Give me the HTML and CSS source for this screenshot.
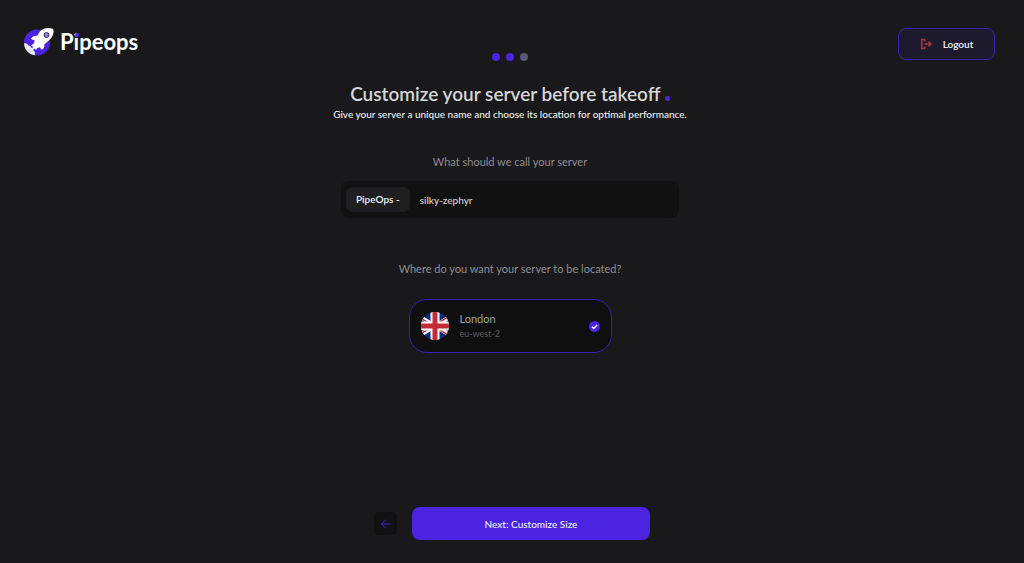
FILE: index.html
```html
<!DOCTYPE html>
<html lang="en">
<head>
    <meta charset="UTF-8">
    <meta name="viewport" content="width=device-width, initial-scale=1.0">
    <title>Pipeops - Customize your server</title>
    <link rel="stylesheet" href="styles.css">
</head>
<body>
    <header class="header">
        <a class="logo" href="#" aria-label="Pipeops">
            <svg class="logo-mark" viewBox="0 0 30 28" aria-hidden="true">
                <circle cx="13" cy="14.500" r="13" fill="#4a24e0"/>
                <path d="M0 15.500c2-.6 3.600.4 4.200 2 1.800-.3 3 .8 3 2.300 1.800.2 2.800 1.500 2.500 3 1.300.8 1.800 2.400 1.200 4.500C4.800 26.400.2 21.500 0 15.500z" fill="#e8e8f2"/>
                <path d="M16 3.200C19.500.2 24-.6 28 .6c1.600.5 1.800 1.800 1.500 4-.5 3.400-2.300 6-5 8.200l-4.300 3.600c.6 2.400-.3 4.400-2.700 5.400l-1.500-2.600-2.600.8-1.600 2.200-1-1.800-3 1.400 1.200-3.200-2-1 2.600-1.900 1.200-3.300-3.900-1.500c1.400-2.200 3.500-3.300 6.200-3z" fill="#fff"/>
                <circle cx="22.500" cy="7" r="2.500" fill="#8a84c8" stroke="#34307c" stroke-width="1"/>
            </svg>
            <span class="logo-text">P<span class="logo-i">i</span>peops</span>
        </a>
        <div class="steps">
            <span class="step active"></span>
            <span class="step active"></span>
            <span class="step"></span>
        </div>
        <button class="logout" type="button">
            <svg class="logout-icon" viewBox="0 0 12 12" aria-hidden="true">
                <path d="M5 1.500H1.800v9H5M5 1.500v2M5 8.500v2M4.500 6H11M8.500 3.500 11 6 8.500 8.500"/>
            </svg>
            Logout
        </button>
    </header>

    <form class="form" id="serverForm">
        <h1 class="title">Customize your server before takeoff <span class="title-dot"></span></h1>
        <p class="subtitle">Give your server a unique name and choose its location for optimal performance.</p>

        <label class="question" for="serverName">What should we call your server</label>
        <div class="name-field">
            <span class="prefix">PipeOps -</span>
            <input class="name-input" id="serverName" type="text" value="silky-zephyr">
        </div>

        <p class="question" id="locationLabel">Where do you want your server to be located?</p>
        <div class="locations" role="radiogroup" aria-labelledby="locationLabel">
            <label class="location" for="london">
                <svg class="flag" viewBox="0 0 28 28" aria-hidden="true">
                    <clipPath id="round"><circle cx="14" cy="14" r="14"/></clipPath>
                    <g clip-path="url(#round)">
                        <path d="M0 0h28v28H0z" fill="#0b2a7c"/>
                        <path d="M-4 3 32 25M32 3-4 25" stroke="#fff" stroke-width="4"/>
                        <path d="M-4 4 14 15M32 2 14 13M14 15 32 26M14 13-4 24" stroke="#c8283a" stroke-width="1.500"/>
                        <path d="M14 0v28M0 14h28" stroke="#fff" stroke-width="9"/>
                        <path d="M14 0v28M0 14h28" stroke="#c42a36" stroke-width="5"/>
                    </g>
                </svg>
                <span class="location-text">
                    <span class="city">London</span>
                    <span class="region">eu-west-2</span>
                </span>
                <span class="check">
                    <input class="check-input" id="london" type="radio" name="location" value="eu-west-2" checked>
                    <svg class="check-icon" viewBox="0 0 11 11" aria-hidden="true">
                        <path d="M3 5.700 4.800 7.400 8.100 3.900"/>
                    </svg>
                </span>
            </label>
        </div>
    </form>

    <footer class="footer">
        <button class="back" type="button" aria-label="Back">
            <svg class="back-icon" viewBox="0 0 10 10" aria-hidden="true">
                <path d="M9.500 5h-9M4.800.700.500 5l4.300 4.300"/>
            </svg>
        </button>
        <button class="next" type="submit" form="serverForm">Next: Customize Size</button>
    </footer>
</body>
</html>
```
FILE: styles.css
```css
* {
    box-sizing: border-box;
}

body {
    display: flex;
    flex-direction: column;
    min-height: 100vh;
    margin: 0;
    background-color: #19191b;
    color: #f0f0f0;
    font-family: Lato, sans-serif;
    font-size: 11px;
}

button,
input {
    font: inherit;
    color: inherit;
}

button {
    cursor: pointer;
}

h1,
p {
    margin: 0;
}

.header {
    display: grid;
    grid-template-columns: 1fr auto 1fr;
    align-items: start;
    padding: 28px 29px 0 24px;
}

.logo {
    display: flex;
    align-items: center;
    gap: 6px;
    color: #fff;
    text-decoration: none;
}

.logo-mark {
    width: 30px;
    height: 28px;
}

.logo-text {
    font-size: 22px;
    font-weight: bold;
    line-height: 28px;
}

.logo-i {
    position: relative;
}

.logo-i::after {
    content: "";
    position: absolute;
    top: 5px;
    left: 1px;
    width: 4px;
    height: 4px;
    border-radius: 50%;
    background-color: #4a24e0;
}

.steps {
    display: flex;
    gap: 6px;
    padding-top: 25px;
}

.step {
    width: 8px;
    height: 8px;
    border-radius: 50%;
    background-color: #5c5875;
}

.step.active {
    background-color: #4a24e0;
}

.logout {
    display: flex;
    justify-content: center;
    align-items: center;
    justify-self: end;
    gap: 11px;
    width: 97px;
    height: 32px;
    padding: 0;
    border: 1px solid #3a20b0;
    border-radius: 8px;
    background-color: #1e1a2d;
    font-size: 10px;
    font-weight: 600;
}

.logout-icon {
    width: 12px;
    height: 12px;
    fill: none;
    stroke: #b03434;
    stroke-width: 1.500;
}

.form {
    display: flex;
    flex-direction: column;
    align-items: center;
    padding: 21px 29px 24px 25px;
}

.title {
    color: #d6d6d6;
    font-size: 19px;
    font-weight: 600;
    line-height: 24px;
}

.title-dot {
    display: inline-block;
    width: 5px;
    height: 5px;
    border-radius: 50%;
    background-color: #4a24e0;
}

.subtitle {
    font-size: 10px;
    font-weight: 500;
    line-height: 16px;
}

.question {
    margin-top: 32px;
    color: #8e8e90;
    line-height: 16px;
}

.name-field {
    display: flex;
    align-items: center;
    gap: 10px;
    width: 100%;
    max-width: 338px;
    margin: 11px 0;
    padding: 6px 5px;
    border-radius: 8px;
    background-color: #111112;
}

.prefix {
    padding: 0 10px;
    border-radius: 7px;
    background-color: #1f1f22;
    font-size: 10px;
    font-weight: 600;
    line-height: 25px;
}

.name-input {
    flex: 1;
    min-width: 0;
    padding: 0;
    border: none;
    outline: none;
    background: none;
    color: #d6d6d6;
    font-size: 10px;
    font-weight: 500;
}

.location {
    display: flex;
    align-items: center;
    gap: 11px;
    width: 203px;
    margin-top: 22px;
    padding: 11px;
    border: 1px solid #3a20b0;
    border-radius: 18px;
    background-color: #0f0f10;
    cursor: pointer;
}

.flag {
    width: 28px;
    height: 28px;
}

.location-text {
    display: flex;
    flex: 1;
    flex-direction: column;
}

.city {
    color: #a2a2a4;
    line-height: 16px;
}

.region {
    color: #5c5c5f;
    font-size: 9px;
    line-height: 14px;
}

.check {
    display: grid;
}

.check-input,
.check-icon {
    grid-area: 1 / 1;
    width: 11px;
    height: 11px;
}

.check-input {
    appearance: none;
    margin: 0;
    border-radius: 50%;
}

.check-input:checked {
    background-color: #4a24e0;
}

.check-icon {
    z-index: 1;
    fill: none;
    stroke: #fff;
    stroke-width: 1.500;
    pointer-events: none;
}

.footer {
    display: flex;
    justify-content: center;
    align-items: center;
    gap: 15px;
    margin-top: auto;
    padding: 0 24px 23px;
}

.back {
    display: flex;
    justify-content: center;
    align-items: center;
    width: 23px;
    height: 23px;
    padding: 0;
    border: none;
    border-radius: 5px;
    background-color: #111112;
}

.back-icon {
    width: 10px;
    height: 10px;
    fill: none;
    stroke: #4a24e0;
}

.next {
    width: 238px;
    height: 33px;
    border: none;
    border-radius: 8px;
    background-color: #4a24e0;
    font-size: 10px;
    font-weight: 500;
}
```
